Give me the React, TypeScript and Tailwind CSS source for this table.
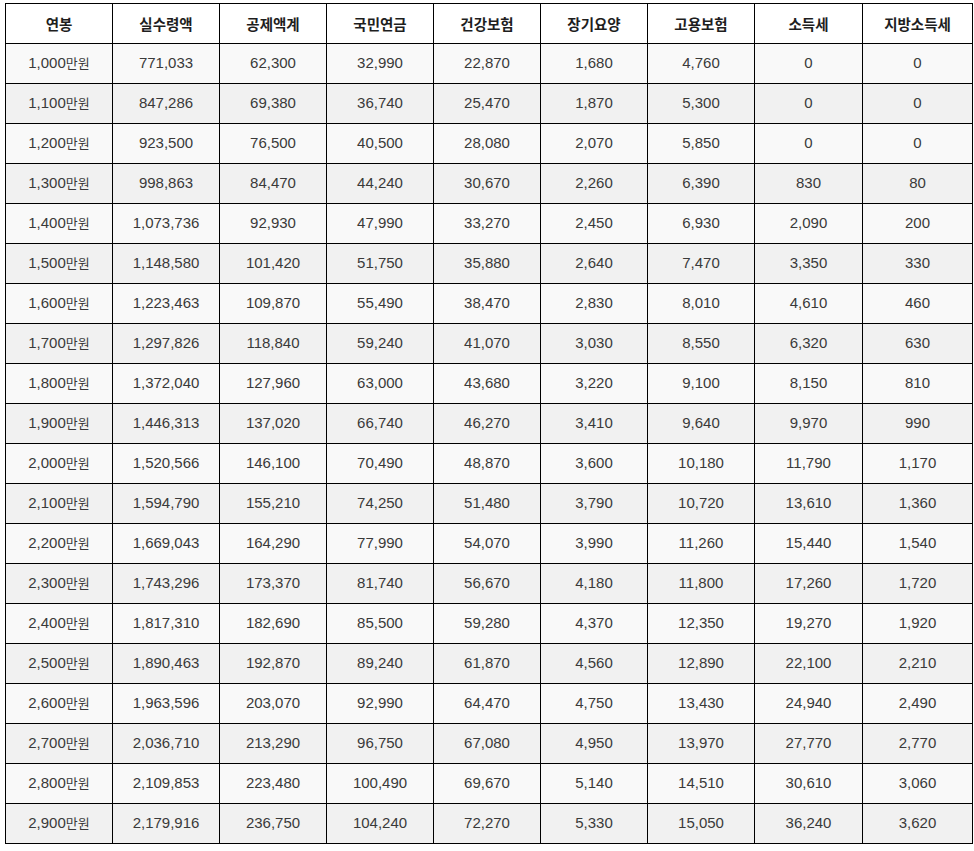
const headers = ["연봉", "실수령액", "공제액계", "국민연금", "건강보험", "장기요양", "고용보험", "소득세", "지방소득세"];

const rows: string[][] = [
  ["1,000만원", "771,033", "62,300", "32,990", "22,870", "1,680", "4,760", "0", "0"],
  ["1,100만원", "847,286", "69,380", "36,740", "25,470", "1,870", "5,300", "0", "0"],
  ["1,200만원", "923,500", "76,500", "40,500", "28,080", "2,070", "5,850", "0", "0"],
  ["1,300만원", "998,863", "84,470", "44,240", "30,670", "2,260", "6,390", "830", "80"],
  ["1,400만원", "1,073,736", "92,930", "47,990", "33,270", "2,450", "6,930", "2,090", "200"],
  ["1,500만원", "1,148,580", "101,420", "51,750", "35,880", "2,640", "7,470", "3,350", "330"],
  ["1,600만원", "1,223,463", "109,870", "55,490", "38,470", "2,830", "8,010", "4,610", "460"],
  ["1,700만원", "1,297,826", "118,840", "59,240", "41,070", "3,030", "8,550", "6,320", "630"],
  ["1,800만원", "1,372,040", "127,960", "63,000", "43,680", "3,220", "9,100", "8,150", "810"],
  ["1,900만원", "1,446,313", "137,020", "66,740", "46,270", "3,410", "9,640", "9,970", "990"],
  ["2,000만원", "1,520,566", "146,100", "70,490", "48,870", "3,600", "10,180", "11,790", "1,170"],
  ["2,100만원", "1,594,790", "155,210", "74,250", "51,480", "3,790", "10,720", "13,610", "1,360"],
  ["2,200만원", "1,669,043", "164,290", "77,990", "54,070", "3,990", "11,260", "15,440", "1,540"],
  ["2,300만원", "1,743,296", "173,370", "81,740", "56,670", "4,180", "11,800", "17,260", "1,720"],
  ["2,400만원", "1,817,310", "182,690", "85,500", "59,280", "4,370", "12,350", "19,270", "1,920"],
  ["2,500만원", "1,890,463", "192,870", "89,240", "61,870", "4,560", "12,890", "22,100", "2,210"],
  ["2,600만원", "1,963,596", "203,070", "92,990", "64,470", "4,750", "13,430", "24,940", "2,490"],
  ["2,700만원", "2,036,710", "213,290", "96,750", "67,080", "4,950", "13,970", "27,770", "2,770"],
  ["2,800만원", "2,109,853", "223,480", "100,490", "69,670", "5,140", "14,510", "30,610", "3,060"],
  ["2,900만원", "2,179,916", "236,750", "104,240", "72,270", "5,330", "15,050", "36,240", "3,620"],
];

// "1,000만원" -> number part in Arial metrics, 만원 a touch smaller
function Cell({ value }: { value: string }) {
  if (value.endsWith("만원")) {
    return (
      <>
        {value.slice(0, -2)}
        <span className="text-[13px]">만원</span>
      </>
    );
  }
  return <>{value}</>;
}

export default function App() {
  return (
    <div className="min-h-screen bg-white pl-[5px] pt-[3px] font-['Liberation_Sans','Noto_Sans_CJK_KR',sans-serif]">
      <table className="w-[967px] table-fixed border-collapse">
        <colgroup>
          <col className="w-[107px]" />
          <col className="w-[107px]" />
          <col className="w-[107px]" />
          <col className="w-[107px]" />
          <col className="w-[107px]" />
          <col className="w-[107px]" />
          <col className="w-[107px]" />
          <col className="w-[108px]" />
          <col className="w-[110px]" />
        </colgroup>
        <thead>
          <tr className="h-[40px] bg-white">
            {headers.map((h) => (
              <th
                key={h}
                className="border border-black text-center align-middle text-[14.5px] font-bold text-[#1e1e1e] font-['Noto_Sans_CJK_KR',sans-serif]"
              >
                {h}
              </th>
            ))}
          </tr>
        </thead>
        <tbody>
          {rows.map((r, i) => (
            <tr key={r[0]} className={`h-[40px] ${i % 2 === 0 ? "bg-[#f9f9f9]" : "bg-[#f1f1f1]"}`}>
              {r.map((c, j) => (
                <td key={j} className="border border-black p-0 text-center align-middle text-[15px] text-[#3a3a3a]">
                  <Cell value={c} />
                </td>
              ))}
            </tr>
          ))}
        </tbody>
      </table>
    </div>
  );
}
